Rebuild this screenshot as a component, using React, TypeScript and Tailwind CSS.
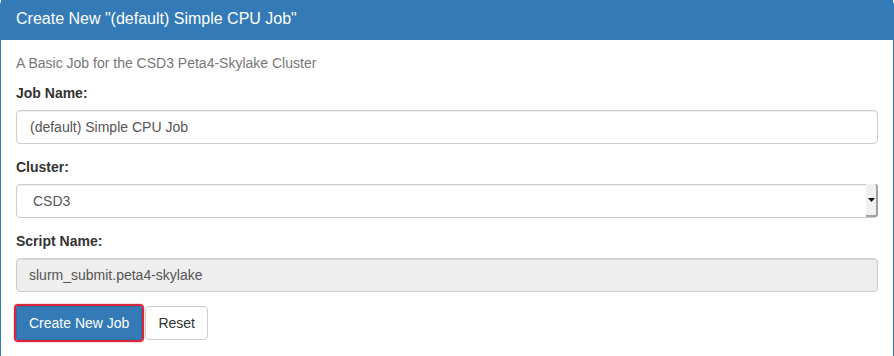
const App = () => {
  return (
    <div className="w-[894px] h-[356px] overflow-hidden bg-white" style={{ fontFamily: '"Liberation Sans", Arial, sans-serif' }}>
      <div className="w-[894px] h-[360px] border border-[#337ab7] rounded-[4px]">
        <div className="h-[40px] bg-[#337ab7] text-white text-[16px] leading-[18px] pl-[15px] pt-[10px] -mt-px">
          Create New "(default) Simple CPU Job"
        </div>
        <div className="px-[15px] pt-[13px]">
          <p className="text-[14px] leading-[20px] text-[#777]">A Basic Job for the CSD3 Peta4-Skylake Cluster</p>

          <label className="block mt-[10px] text-[14px] leading-[20px] font-bold text-[#333]">Job Name:</label>
          <div className="mt-[7px] h-[34px] border border-[#ccc] rounded-[4px] flex items-center pl-[13px] text-[14px] text-[#555] shadow-[inset_0_1px_1px_rgba(0,0,0,0.075)]">
            (default) Simple CPU Job
          </div>

          <label className="block mt-[13px] text-[14px] leading-[20px] font-bold text-[#333]">Cluster:</label>
          <div className="mt-[7px] h-[34px] border border-[#ccc] rounded-[4px] flex items-center text-[14px] text-[#555] shadow-[inset_0_1px_1px_rgba(0,0,0,0.075)]">
            <span className="flex-1 pl-[16px]">CSD3</span>
            <div className="w-[12px] h-[33px] -mr-px -mt-px bg-[#f0f0f0] border-r-2 border-b-2 border-[#a0a0a0] rounded-r-[3px] flex items-center justify-center">
              <svg width="7" height="4" viewBox="0 0 7 4">
                <path d="M0 0h7L3.5 4z" fill="#111" />
              </svg>
            </div>
          </div>

          <label className="block mt-[13px] text-[14px] leading-[20px] font-bold text-[#333]">Script Name:</label>
          <div className="mt-[7px] h-[34px] border border-[#ccc] rounded-[4px] bg-[#eee] flex items-center pl-[12px] text-[14px] text-[#555] shadow-[inset_0_1px_1px_rgba(0,0,0,0.075)]">
            slurm_submit.peta4-skylake
          </div>

          <div className="mt-[14px] flex items-center">
            <button className="h-[34px] px-[12px] bg-[#337ab7] border border-[#2e6da4] text-white text-[14px] rounded-[2px] outline-2 outline-[#d9263b] outline-offset-0 shadow-[0_0_0_3px_rgba(217,38,59,0.15)]">
              Create New Job
            </button>
            <button className="ml-[3px] h-[34px] px-[12px] bg-white border border-[#ccc] text-[#333] text-[14px] rounded-[4px]">
              Reset
            </button>
          </div>
        </div>
      </div>
    </div>
  );
};

export default App;
